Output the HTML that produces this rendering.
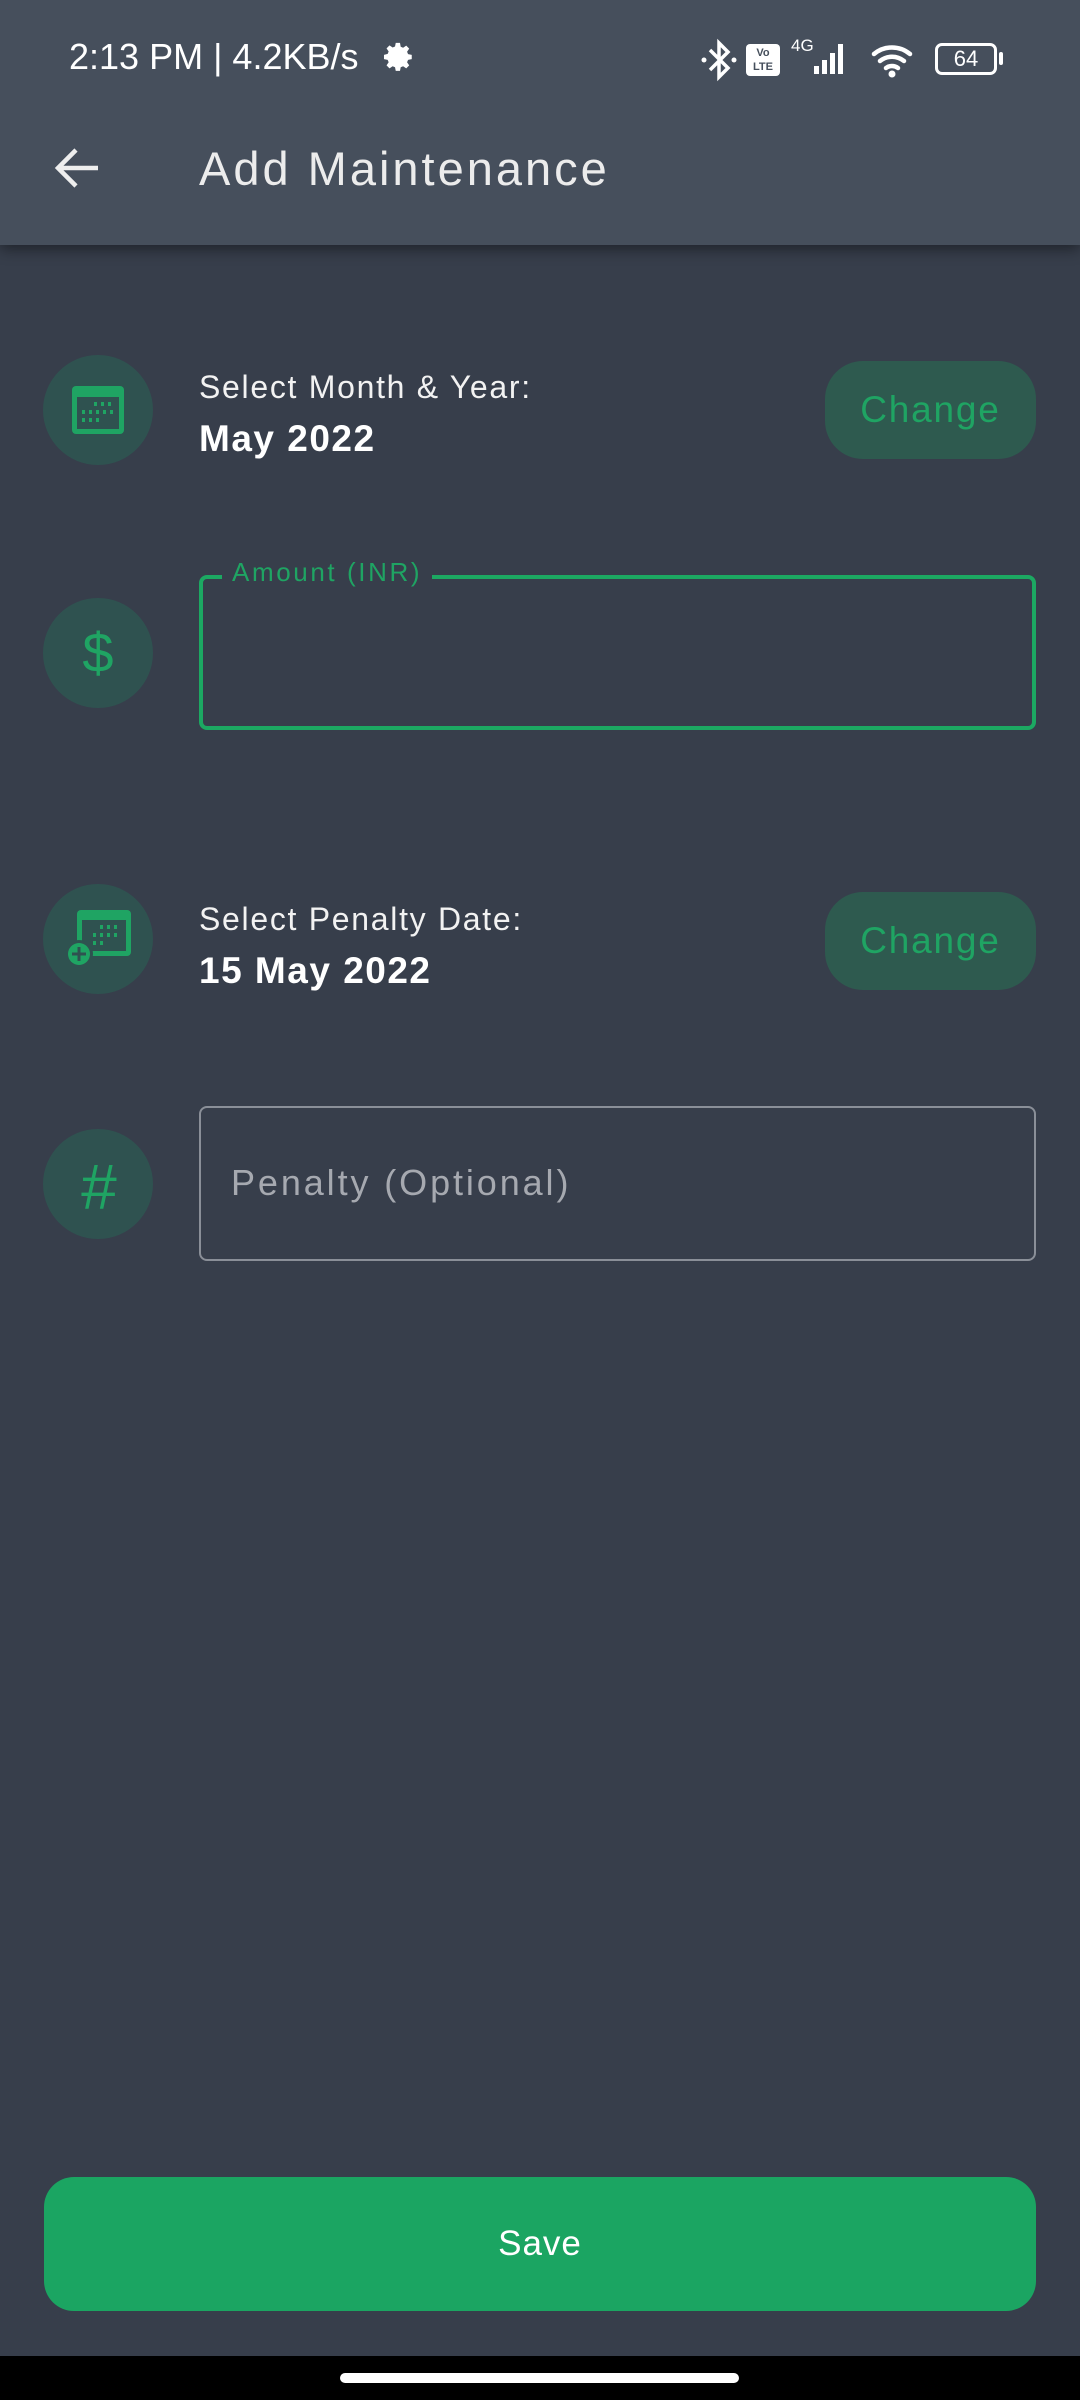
<!DOCTYPE html>
<html><head><meta charset="utf-8"><style>
*{margin:0;padding:0;box-sizing:border-box}
body{width:1080px;height:2400px;background:#373e4b;font-family:"Liberation Sans",sans-serif;position:relative;overflow:hidden}
.abs{position:absolute}
.appbar{left:0;top:0;width:1080px;height:245px;background:#464f5c;box-shadow:0 4px 14px rgba(0,0,0,.45)}
.circ{width:110px;height:110px;border-radius:50%;background:#2f5250;left:43px}
.lbl{color:#f2f2f2;font-size:32px;left:199px;letter-spacing:1.7px}
.val{color:#fff;font-size:37px;font-weight:bold;left:199px;letter-spacing:1.5px}
.chg{left:825px;width:211px;height:98px;border-radius:38px;background:#2e5a4f;color:#1fa463;font-size:37px;display:flex;align-items:center;justify-content:center;letter-spacing:1.8px}
</style></head><body>
<div class="abs appbar"></div>
<div class="abs" style="left:69px;top:36px;color:#fff;font-size:36px">2:13 PM | 4.2KB/s</div>
<svg class="abs" style="left:382px;top:40px" width="34" height="34" viewBox="0 0 24 24"><path fill="#fff" d="M12 8a4 4 0 100 8 4 4 0 000-8zm9 5.5v-3l-2.6-.5-.7-1.7 1.5-2.2-2.1-2.1-2.2 1.5-1.7-.7L12.7 2h-3l-.5 2.6-1.7.7-2.2-1.5-2.1 2.1 1.5 2.2-.7 1.7L1.4 10.5v3l2.6.5.7 1.7-1.5 2.2 2.1 2.1 2.2-1.5 1.7.7.5 2.6h3l.5-2.6 1.7-.7 2.2 1.5 2.1-2.1-1.5-2.2.7-1.7z"/></svg>
<svg class="abs" style="left:700px;top:38px" width="38" height="44" viewBox="0 0 38 44"><path d="M10 12l18 18-9 9V5l9 9-18 18" stroke="#fff" stroke-width="3.5" fill="none"/><circle cx="4" cy="22" r="2.5" fill="#fff"/><circle cx="34" cy="22" r="2.5" fill="#fff"/></svg>
<div class="abs" style="left:746px;top:44px;width:34px;height:32px;background:#fff;border-radius:4px;color:#464f5c;font-size:11px;font-weight:bold;text-align:center;line-height:14px;padding-top:2px">Vo<br>LTE</div>
<div class="abs" style="left:791px;top:36px;color:#fff;font-size:17px">4G</div>
<svg class="abs" style="left:790px;top:40px" width="68" height="36" viewBox="0 0 68 36"><rect x="24" y="26" width="5" height="8" fill="#fff"/><rect x="32" y="20" width="5" height="14" fill="#fff"/><rect x="40" y="13" width="5" height="21" fill="#fff"/><rect x="48" y="4" width="5" height="30" fill="#fff"/></svg>
<svg class="abs" style="left:870px;top:40px" width="48" height="40" viewBox="0 0 48 40"><path d="M4 14a28 28 0 0136 0M10 21a19 19 0 0124 0M16 28a10 10 0 0112 0" stroke="#fff" stroke-width="4.5" fill="none" stroke-linecap="round"/><circle cx="22" cy="34" r="3.5" fill="#fff"/></svg>
<div class="abs" style="left:935px;top:43px;width:62px;height:32px;border:3px solid #fff;border-radius:7px;color:#fff;font-size:22px;text-align:center;line-height:26px">64</div>
<div class="abs" style="left:999px;top:52px;width:4px;height:13px;background:#fff;border-radius:2px"></div>
<svg class="abs" style="left:52px;top:146px" width="50" height="44" viewBox="0 0 50 44"><path d="M46 22H6M24 4L6 22l18 18" stroke="#eee" stroke-width="4.5" fill="none"/></svg>
<div class="abs" style="left:199px;top:141px;color:#ececec;font-size:47px;letter-spacing:3px">Add Maintenance</div>

<div class="abs circ" style="top:355px"></div>
<svg class="abs" style="left:70px;top:382px" width="56" height="56" viewBox="0 0 56 56"><rect x="2" y="4" width="52" height="48" rx="4" fill="#1fa463"/><rect x="7" y="15" width="42" height="32" fill="#2f5250"/><g fill="#1fa463"><rect x="24" y="20" width="3" height="4"/><rect x="31" y="20" width="3" height="4"/><rect x="38" y="20" width="3" height="4"/><rect x="12" y="28" width="3" height="4"/><rect x="19" y="28" width="3" height="4"/><rect x="26" y="28" width="3" height="4"/><rect x="33" y="28" width="3" height="4"/><rect x="40" y="28" width="3" height="4"/><rect x="12" y="36" width="3" height="4"/><rect x="19" y="36" width="3" height="4"/><rect x="26" y="36" width="3" height="4"/></g></svg>
<div class="abs lbl" style="top:369px">Select Month &amp; Year:</div>
<div class="abs val" style="top:418px">May 2022</div>
<div class="abs chg" style="top:361px">Change</div>

<div class="abs circ" style="top:598px"></div>
<div class="abs" style="left:78px;top:620px;color:#1fa463;font-size:56px;width:40px;text-align:center">$</div>
<div class="abs" style="left:199px;top:575px;width:837px;height:155px;border:4.5px solid #1ca862;border-radius:8px"></div>
<div class="abs" style="left:222px;top:557px;background:#373e4b;padding:0 10px;color:#1fa463;font-size:26px;letter-spacing:2.6px">Amount (INR)</div>

<div class="abs circ" style="top:884px"></div>
<svg class="abs" style="left:64px;top:908px" width="70" height="64" viewBox="0 0 70 64"><rect x="13" y="2" width="54" height="46" rx="4" fill="#1fa463"/><rect x="18" y="12" width="44" height="31" fill="#2f5250"/><g fill="#1fa463"><rect x="36" y="17" width="3" height="4"/><rect x="43" y="17" width="3" height="4"/><rect x="50" y="17" width="3" height="4"/><rect x="29" y="25" width="3" height="4"/><rect x="36" y="25" width="3" height="4"/><rect x="43" y="25" width="3" height="4"/><rect x="50" y="25" width="3" height="4"/><rect x="29" y="33" width="3" height="4"/><rect x="36" y="33" width="3" height="4"/></g><circle cx="15" cy="46" r="14" fill="#2f5250"/><circle cx="15" cy="46" r="11" fill="#1fa463"/><path d="M15 39v14M8 46h14" stroke="#2f5250" stroke-width="3"/></svg>
<div class="abs lbl" style="top:901px">Select Penalty Date:</div>
<div class="abs val" style="top:950px">15 May 2022</div>
<div class="abs chg" style="top:892px">Change</div>

<div class="abs circ" style="top:1129px"></div>
<div class="abs" style="left:68px;top:1150px;color:#1fa463;font-size:64px;width:60px;text-align:center;font-style:italic">#</div>
<div class="abs" style="left:199px;top:1106px;width:837px;height:155px;border:2.5px solid #8a8f98;border-radius:8px"></div>
<div class="abs" style="left:231px;top:1162px;color:#a6a9b0;font-size:36px;letter-spacing:2.9px">Penalty (Optional)</div>

<div class="abs" style="left:44px;top:2177px;width:992px;height:134px;border-radius:30px;background:#1ba562;color:#fff;font-size:35px;display:flex;align-items:center;justify-content:center;letter-spacing:1px">Save</div>
<div class="abs" style="left:0;top:2356px;width:1080px;height:44px;background:#000"></div>
<div class="abs" style="left:340px;top:2373px;width:399px;height:10px;border-radius:5px;background:#fff"></div>
</body></html>
